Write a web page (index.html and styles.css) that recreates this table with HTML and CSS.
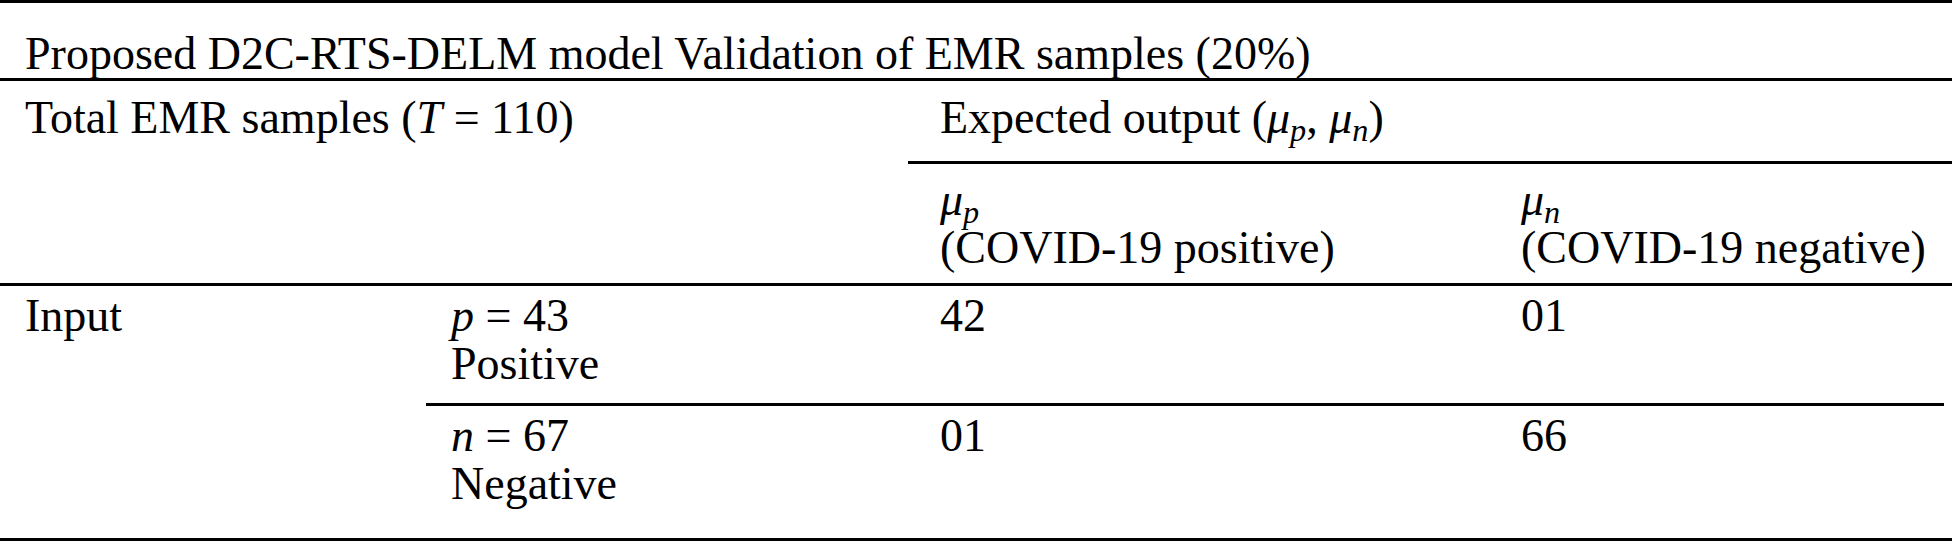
FILE: index.html
```html
<!DOCTYPE html>
<html lang="en">
<head>
    <meta charset="UTF-8">
    <meta name="viewport" content="width=device-width, initial-scale=1.0">
    <title>D2C-RTS-DELM Validation</title>
    <link rel="stylesheet" href="styles.css">
</head>
<body>
    <table class="result-table">
        <colgroup>
            <col class="col-a">
            <col class="col-b">
            <col class="col-c">
            <col class="col-d">
        </colgroup>

        <!-- Caption row -->
        <tr class="caption-row">
            <td colspan="4">Proposed D2C-RTS-DELM model Validation of EMR samples (20%)</td>
        </tr>

        <!-- Header rows -->
        <tr class="head-row">
            <td colspan="2" rowspan="2" class="total-cell">Total EMR samples (<i>T</i> = 110)</td>
            <td colspan="2" class="expected-cell wide">Expected output (<i>μ<sub>p</sub></i>, <i>μ<sub>n</sub></i>)</td>
        </tr>
        <tr class="sub-head-row">
            <td class="wide"><i>μ<sub>p</sub></i><br>(COVID-19 positive)</td>
            <td class="wide"><i>μ<sub>n</sub></i><br>(COVID-19 negative)</td>
        </tr>

        <!-- Body rows -->
        <tr class="body-row first">
            <td rowspan="2" class="input-cell">Input</td>
            <td class="split"><i>p</i> = 43<br>Positive</td>
            <td class="wide split">42</td>
            <td class="wide split-end">01</td>
        </tr>
        <tr class="body-row last">
            <td><i>n</i> = 67<br>Negative</td>
            <td class="wide">01</td>
            <td class="wide">66</td>
        </tr>
    </table>
</body>
</html>
```

FILE: styles.css
```css
body {
    margin: 0;
    background-color: #fff;
    color: #000;
    font-family: "Liberation Serif", "Times New Roman", serif;
}
.result-table {
    width: 1952px;
    border-collapse: separate;
    border-spacing: 0;
    table-layout: fixed;
    font-size: 46px;
    line-height: 48px;
}
.col-a { width: 426px; }
.col-b { width: 482px; }
.col-c { width: 581px; }
.col-d { width: 463px; }
td {
    padding: 0 0 0 25px;
    vertical-align: top;
    white-space: nowrap;
}
td.wide {
    padding-left: 32px;
}
i {
    font-style: italic;
}
sub {
    font-size: 0.7em;
    line-height: 0;
    vertical-align: -0.25em;
}
.caption-row td {
    border-top: 3px solid #000;
    border-bottom: 3px solid #000;
    padding-top: 27px;
    padding-bottom: 0;
}
.head-row td {
    padding-top: 13px;
    padding-bottom: 19px;
}
.expected-cell {
    border-bottom: 3px solid #000;
}
.total-cell {
    border-bottom: 3px solid #000;
}
.sub-head-row td {
    padding-top: 12px;
    padding-bottom: 11px;
    border-bottom: 3px solid #000;
}
.body-row.first td {
    padding-top: 6px;
    padding-bottom: 15px;
}
.body-row.first td.split {
    border-bottom: 3px solid #000;
}
/* the middle rule stops a little short of the right edge */
.body-row.first td.split-end {
    border-bottom: 3px solid transparent;
    background: linear-gradient(#000, #000) left bottom / calc(100% - 8px) 3px no-repeat border-box;
}
.body-row.last td {
    padding-top: 6px;
    padding-bottom: 30px;
    border-bottom: 3px solid #000;
}
.body-row.first td.input-cell {
    padding-bottom: 30px;
    border-bottom: 3px solid #000;
}
```
